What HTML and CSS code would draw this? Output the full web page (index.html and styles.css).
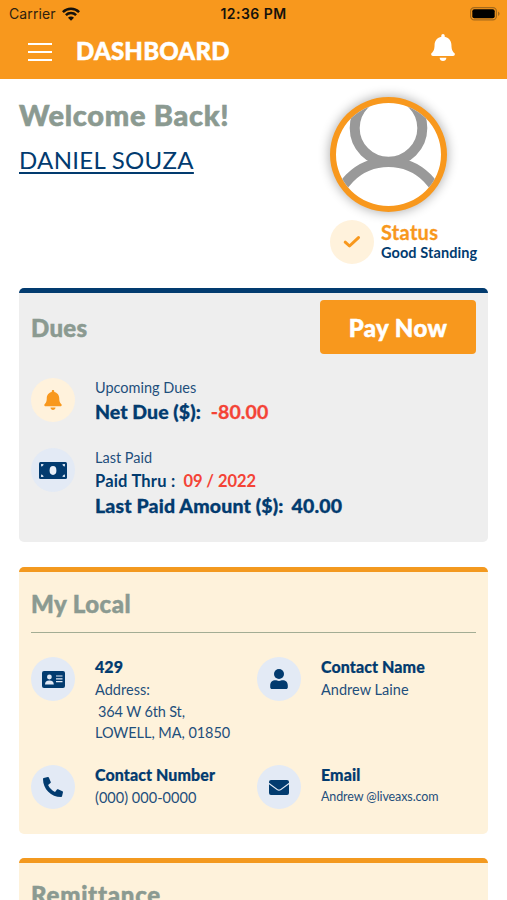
FILE: index.html
```html
<!DOCTYPE html>
<html lang="en">
<head>
<meta charset="utf-8">
<title>Dashboard</title>
<link rel="stylesheet" href="styles.css">
</head>
<body>
<svg class="defs" width="0" height="0" aria-hidden="true">
  <symbol id="bell" viewBox="0 0 448 512"><path d="M224 512c35.300 0 63.900-28.650 63.900-64H160.100c0 35.350 28.600 64 63.900 64zm215.400-149.700c-19.300-20.800-55.500-52-55.500-154.300 0-77.700-54.500-139.900-127.900-155.200V32c0-17.700-14.300-32-32-32s-32 14.300-32 32v20.800C118.600 68.100 64.100 130.300 64.100 208c0 102.300-36.200 133.500-55.500 154.300C2.600 368.700 0 376.400 0 384c.1 16.400 13 32 32.100 32h383.800c19.100 0 32-15.600 32.100-32 0-7.600-2.600-15.300-8.600-21.700z"/></symbol>
</svg>
<header class="header">
  <div class="statusbar">
    <div class="carrier"><span>Carrier</span>
      <svg width="18" height="14" viewBox="0 0 18 14"><g fill="none" stroke="#15120c" stroke-width="2.500"><path d="M.9 5.100a11.500 11.500 0 0 1 16.200 0"/><path d="M3.900 8.200a7.200 7.200 0 0 1 10.200 0"/></g><path fill="#15120c" d="M9 13.700 6 10.700a4.250 4.250 0 0 1 6 0z"/></svg>
    </div>
    <div class="time">12:36 PM</div>
    <svg class="battery" width="30" height="14" viewBox="0 0 30 14"><rect x=".6" y=".6" width="25.800" height="12.300" rx="3.600" fill="none" stroke="#a56a1c" stroke-width="1.200"/><rect x="2.300" y="2.300" width="22.400" height="9" rx="2" fill="#000"/><path d="M28 4.500v4.600q1.600-.8 1.600-2.300T28 4.500z" fill="#a56a1c"/></svg>
  </div>
  <div class="appbar">
    <div class="menu"><i></i><i></i><i></i></div>
    <h1>DASHBOARD</h1>
    <svg class="alert" width="24" height="27"><use href="#bell"/></svg>
  </div>
</header>
<main>
  <section class="hero">
    <div class="greeting">
      <h2>Welcome Back!</h2>
      <a class="member">DANIEL SOUZA</a>
    </div>
    <div class="profile">
      <div class="avatar">
        <svg width="105" height="103" viewBox="336 103 105 103" fill="none" stroke="#999" stroke-width="10"><circle cx="388.500" cy="128" r="33.800"/><circle cx="388.500" cy="217" r="55"/></svg>
      </div>
      <div class="standing">
        <div class="dot cream"><svg width="18" height="14" viewBox="0 0 18 14"><path d="M2.200 7.200 6.500 11 15.500 2.600" fill="none" stroke="#f8981d" stroke-width="3" stroke-linecap="round" stroke-linejoin="round"/></svg></div>
        <div><div class="status">Status</div><div class="good">Good Standing</div></div>
      </div>
    </div>
  </section>

  <section class="card dues">
    <div class="dues-head"><h3>Dues</h3><button>Pay Now</button></div>
    <div class="row upcoming">
      <div class="dot cream"><svg class="orange" width="18" height="20"><use href="#bell"/></svg></div>
      <div><div class="label">Upcoming Dues</div><div class="amount net"><span>Net Due ($):</span><span class="red">-80.00</span></div></div>
    </div>
    <div class="row last">
      <div class="dot"><svg width="28" height="17" viewBox="0 0 28 17"><rect width="28" height="17" rx="1.500"/><ellipse cx="14" cy="8.500" rx="3.400" ry="4.400" fill="#e9eff7"/><g fill="#cddbea"><path d="M2 4.500V2h2.500A2.500 2.500 0 0 1 2 4.500zM26 4.500V2h-2.500A2.500 2.500 0 0 0 26 4.500zM2 12.500V15h2.500A2.500 2.500 0 0 0 2 12.500zM26 12.500V15h-2.500a2.500 2.500 0 0 1 2.500-2.500z"/></g></svg></div>
      <div><div class="label">Last Paid</div><div class="thru"><span>Paid Thru :</span><span class="red date">09 / 2022</span></div><div class="amount paid"><span>Last Paid Amount ($):</span><span>40.00</span></div></div>
    </div>
  </section>

  <section class="card cream-card local">
    <h3>My Local</h3>
    <div class="grid">
      <div class="row">
        <div class="dot"><svg width="23" height="17" viewBox="0 0 23 17"><rect width="23" height="17" rx="2"/><g fill="#e3eaf5"><circle cx="7.400" cy="6" r="2.400"/><path d="M3 13.400c0-2.500 1.400-3.800 4.400-3.800s4.400 1.300 4.400 3.800zM14 4.500h6.500v1.100H14zM14 7.300h6.500v1.100H14zM14 10.100h6.500v1.100H14z"/></g></svg></div>
        <div><div class="title">429</div><div class="text">Address:</div><div class="text street">364 W 6th St,</div><div class="text city">LOWELL, MA, 01850</div></div>
      </div>
      <div class="row">
        <div class="dot"><svg width="18" height="20" viewBox="0 0 18 20"><circle cx="9" cy="5" r="5"/><path d="M.2 16.500C.2 13 2.400 11.200 5.400 11.200c1.300 0 1.900.7 3.600.7s2.300-.7 3.600-.7c3 0 5.200 1.800 5.200 5.300v1.700c0 1-.8 1.800-1.800 1.800H2C1 20 .2 19.200.2 18.200z"/></svg></div>
        <div><div class="title">Contact Name</div><div class="text">Andrew Laine</div></div>
      </div>
      <div class="row">
        <div class="dot"><svg width="20" height="20" viewBox="0 0 512 512"><path transform="matrix(-1 0 0 1 512 0)" d="M493.400 24.600l-104-24c-11.300-2.600-22.900 3.300-27.500 13.900l-48 112c-4.200 9.800-1.400 21.300 6.900 28l60.600 49.600c-36 76.700-98.900 140.500-177.200 177.200l-49.600-60.600c-6.800-8.300-18.200-11.100-28-6.900l-112 48C3.900 366.500-2 378.100.6 389.400l24 104C27.100 504.200 36.700 512 48 512c256.100 0 464-207.500 464-464 0-11.200-7.700-20.900-18.600-23.400z"/></svg></div>
        <div><div class="title">Contact Number</div><div class="text">(000) 000-0000</div></div>
      </div>
      <div class="row">
        <div class="dot"><svg width="20" height="15" viewBox="0 0 20 15"><path d="M2 0h16q2 0 2 2v.8l-8.400 6.100q-1.600 1.100-3.200 0L0 2.800V2Q0 0 2 0z"/><path d="M0 4.300 7.900 10q2.100 1.400 4.200 0L20 4.300V13q0 2-2 2H2q-2 0-2-2z"/></svg></div>
        <div><div class="title">Email</div><div class="text mail">Andrew @liveaxs.com</div></div>
      </div>
    </div>
  </section>

  <section class="card cream-card remit"><h3>Remittance</h3></section>
</main>
</body>
</html>
```
FILE: styles.css
```css
* { box-sizing: border-box; margin: 0; padding: 0; }
html, body { height: 900px; overflow: hidden; }
body { background: #fff; font-family: Lato, "Liberation Sans", sans-serif; font-variant-ligatures: none; color: #023b6f; white-space: nowrap; }
svg { display: block; }
.defs { position: absolute; }
.header { height: 79px; background: #f8981d; }
.statusbar { height: 27px; display: grid; grid-template-columns: 1fr auto 1fr; align-items: center; padding: 0 7px 0 9px; font-family: Inter, sans-serif; font-size: 14px; color: #15120c; }
.carrier { display: flex; align-items: center; gap: 6px; }
.carrier span { color: #2e210f; letter-spacing: .1px; }
.time { font-weight: 600; font-size: 14px; letter-spacing: .45px; margin-right: 2px; }
.battery { justify-self: end; }
.appbar { height: 52px; display: flex; align-items: flex-start; padding: 0 52px 0 28px; color: #fff; }
.menu { width: 24px; margin: 16px 24px 0 0; display: flex; flex-direction: column; gap: 6px; }
.menu i { height: 2px; background: #fff; }
h1 { font-size: 24px; line-height: 30px; font-weight: 900; margin-top: 9px; letter-spacing: .2px; -webkit-text-stroke: .5px; }
.alert { margin-left: auto; margin-top: 7px; fill: #fff; }
main { padding: 0 19px; }
.hero { height: 209px; display: flex; justify-content: space-between; }
.greeting { padding-top: 18px; }
h2 { font-size: 29px; line-height: 36px; font-weight: 900; color: #8b9a91; letter-spacing: .7px; -webkit-text-stroke: .6px; }
.member { display: block; font-size: 24px; line-height: 30px; margin-top: 12px; letter-spacing: .3px; text-decoration: underline; text-decoration-thickness: 1.500px; text-underline-offset: 3px; }
.profile { width: 158px; padding-top: 18px; }
.avatar { width: 117px; height: 115px; border: 6px solid #f8981d; border-radius: 50%; overflow: hidden; background: #fff; box-shadow: 0 0 11px 1px rgba(0,0,0,.3); }
.standing { display: flex; gap: 7px; margin-top: 8px; }
.dot { flex: none; width: 44px; height: 44px; border-radius: 50%; background: #e3eaf5; display: flex; align-items: center; justify-content: center; fill: #023b6f; }
.dot.cream { background: #fff2dc; }
.orange { fill: #f8981d; }
.status { font-size: 20px; line-height: 24px; font-weight: 700; color: #f8981d; letter-spacing: .3px; -webkit-text-stroke: .3px; }
.good { font-size: 14.500px; line-height: 18px; font-weight: 700; letter-spacing: .08px; }
.card { border-radius: 5px; border-top: 5px solid #023b6f; background: #eee; padding: 0 12px; margin-bottom: 25px; }
.cream-card { border-top-color: #f3991f; background: #fef2db; }
h3 { font-size: 24px; line-height: 30px; font-weight: 900; color: #8b9a91; letter-spacing: .45px; -webkit-text-stroke: .5px; }
.dues { height: 254px; }
.dues-head { display: flex; justify-content: space-between; padding-top: 7px; height: 85px; }
.dues-head h3 { margin-top: 13px; letter-spacing: .3px; }
button { width: 156px; height: 54px; border: 0; border-radius: 4px; background: #f8981d; color: #fff; font: 900 24px/55px Lato, sans-serif; letter-spacing: .4px; -webkit-text-stroke: .5px; }
.row { display: flex; gap: 20px; }
.label { font-size: 14.500px; line-height: 20px; color: #1e4f7c; }
.amount { font-size: 19.500px; line-height: 26px; font-weight: 900; display: flex; -webkit-text-stroke: .3px; }
.net { gap: 10px; margin-top: 1px; letter-spacing: .05px; }
.paid { gap: 8px; letter-spacing: .15px; }
.thru { font-size: 16.500px; line-height: 24px; font-weight: 700; display: flex; gap: 8px; margin-top: 1px; letter-spacing: .2px; }
.red { color: #f44336; font-weight: 700; }
.date { letter-spacing: -.05px; }
.upcoming { height: 70px; }
.local { height: 267px; margin-bottom: 24px; }
.local h3 { height: 61px; padding-top: 17px; border-bottom: 1px solid #a3ad94; }
.grid { display: grid; grid-template-columns: 226px 1fr; grid-template-rows: 108px 60px; padding-top: 24px; }
.title { font-size: 16px; line-height: 20px; font-weight: 900; letter-spacing: .08px; -webkit-text-stroke: .2px; }
.text { font-size: 14.500px; line-height: 21.500px; margin-top: 2px; letter-spacing: .03px; color: #1e4f7c; }
.street { padding-left: 3px; margin-top: 0; letter-spacing: -.15px; }
.city { margin-top: 0; letter-spacing: -.05px; }
.mail { font-size: 12.500px; line-height: 19px; letter-spacing: -.1px; }
.remit { height: 42px; overflow: hidden; margin-bottom: 0; border-radius: 5px 5px 0 0; }
.remit h3 { padding-top: 17px; letter-spacing: .75px; }
```
